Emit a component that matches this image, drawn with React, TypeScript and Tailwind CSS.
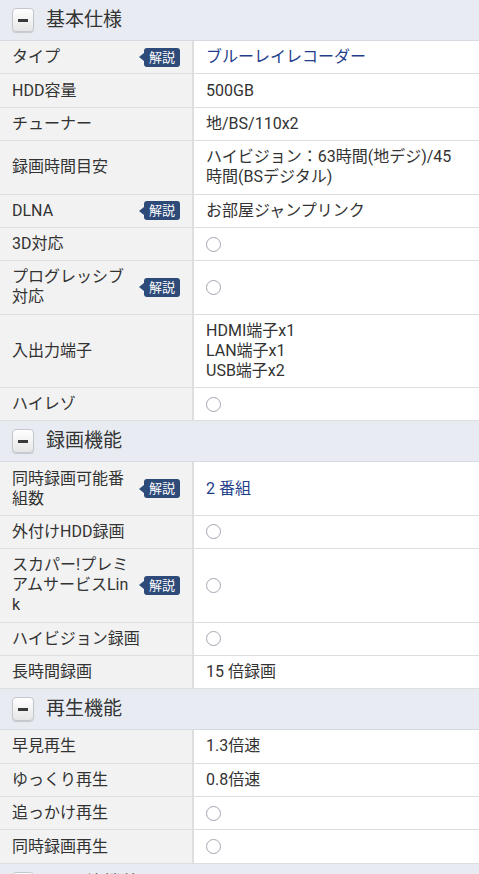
import React from 'react';

type Row = {
  label: string;
  value?: string[];
  circle?: boolean;
  link?: boolean;
  badge?: boolean;
};

type Section = { title: string; rows: Row[] };

const sections: Section[] = [
  {
    title: '基本仕様',
    rows: [
      { label: 'タイプ', value: ['ブルーレイレコーダー'], link: true, badge: true },
      { label: 'HDD容量', value: ['500GB'] },
      { label: 'チューナー', value: ['地/BS/110x2'] },
      { label: '録画時間目安', value: ['ハイビジョン：63時間(地デジ)/45時間(BSデジタル)'] },
      { label: 'DLNA', value: ['お部屋ジャンプリンク'], badge: true },
      { label: '3D対応', circle: true },
      { label: 'プログレッシブ対応', circle: true, badge: true },
      { label: '入出力端子', value: ['HDMI端子x1', 'LAN端子x1', 'USB端子x2'] },
      { label: 'ハイレゾ', circle: true },
    ],
  },
  {
    title: '録画機能',
    rows: [
      { label: '同時録画可能番組数', value: ['2 番組'], link: true, badge: true },
      { label: '外付けHDD録画', circle: true },
      { label: 'スカパー!プレミアムサービスLink', circle: true, badge: true },
      { label: 'ハイビジョン録画', circle: true },
      { label: '長時間録画', value: ['15 倍録画'] },
    ],
  },
  {
    title: '再生機能',
    rows: [
      { label: '早見再生', value: ['1.3倍速'] },
      { label: 'ゆっくり再生', value: ['0.8倍速'] },
      { label: '追っかけ再生', circle: true },
      { label: '同時録画再生', circle: true },
    ],
  },
  { title: 'その他機能', rows: [] },
];

function Badge() {
  return (
    <span className="flex items-center shrink-0 ml-[6px]">
      <span className="w-0 h-0 border-y-[4px] border-y-transparent border-r-[5px] border-r-[#2e4a78]" />
      <span className="h-[19px] px-[5px] rounded-[3px] bg-[#2e4a78] text-white text-[13px] leading-[19px]">解説</span>
    </span>
  );
}

function SectionHeader({ title }: { title: string }) {
  return (
    <div className="h-[41px] flex items-center gap-[12px] pl-[12px] bg-[#e8ecf2] border-b border-[#d6dbe2]">
      <span className="w-[22px] h-[24px] rounded-[4px] border border-[#c4c8ce] bg-gradient-to-b from-white to-[#e6e6e6] shadow-[0_1px_1px_rgba(0,0,0,0.15)] flex items-center justify-center">
        <span className="w-[10px] h-[3px] bg-[#3a3a3a]" />
      </span>
      <span className="text-[19px] text-[#333]">{title}</span>
    </div>
  );
}

export default function App() {
  return (
    <div className="w-[479px] h-[874px] overflow-hidden bg-white text-[#333]" style={{ fontFamily: 'Roboto, "Noto Sans CJK JP", sans-serif' }}>
      {sections.map((s) => (
        <div key={s.title}>
          <SectionHeader title={s.title} />
          {s.rows.map((r) => (
            <div key={r.label} className="flex border-b border-[#dedede] text-[16px] leading-[20px]">
              <div className="w-[194px] shrink-0 bg-[#f2f2f2] border-r-2 border-[#dedede] px-[12px] py-[6.2px] flex items-center">
                <span className="flex-1 min-w-0 break-all">{r.label}</span>
                {r.badge && <Badge />}
              </div>
              <div className="flex-1 px-[12px] py-[6.2px] flex flex-col justify-center">
                {r.circle && <span className="block w-[15px] h-[15px] rounded-full border-[1.5px] border-[#a3a7b3]" />}
                {r.value?.map((v) => (
                  <span key={v} className={r.link ? 'text-[#1f3f8c]' : ''}>{v}</span>
                ))}
              </div>
            </div>
          ))}
        </div>
      ))}
    </div>
  );
}
